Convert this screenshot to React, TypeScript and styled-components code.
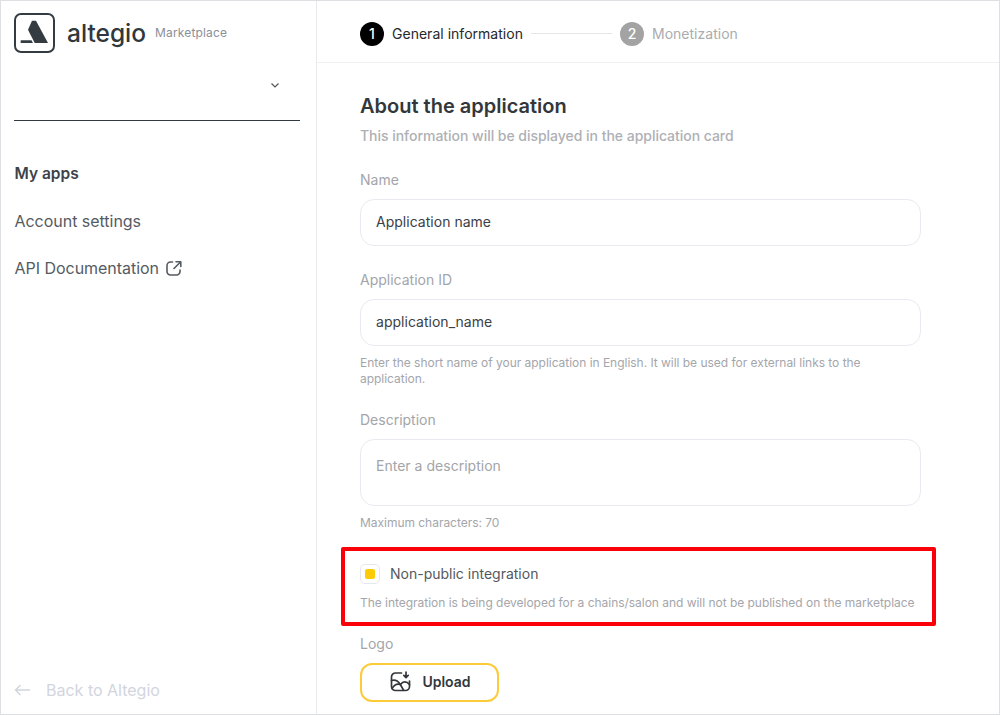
import React from "react";
import styled, { createGlobalStyle } from "styled-components";

const Global = createGlobalStyle`
  html, body { margin: 0; padding: 0; height: 100%; background: #fff; }
  body { font-family: Inter, "Liberation Sans", sans-serif; overflow: hidden; }
  * { box-sizing: border-box; }
`;

const Page = styled.div`
  width: 1000px;
  height: 715px;
  display: flex;
  overflow: hidden;
  border: 1px solid #dedfe2;
  background: #fff;
`;

const Sidebar = styled.aside`
  width: 316px;
  flex: none;
  display: flex;
  flex-direction: column;
  border-right: 1px solid #e9eaee;
  padding: 12px 16px 0 13px;
`;

const Brand = styled.div`
  display: flex;
  align-items: center;
  height: 40px;
`;

const LogoMark = styled.svg`
  width: 41px;
  height: 40px;
  flex: none;
`;

const Wordmark = styled.span`
  margin-left: 12px;
  font-family: Inter, sans-serif;
  font-size: 24.5px;
  font-weight: 500;
  color: #2f383d;
  line-height: 30px;
`;

const BrandTag = styled.span`
  margin-left: 9px;
  margin-top: -2px;
  font-size: 12px;
  letter-spacing: 0.15px;
  color: #8a8f99;
`;

const Select = styled.div`
  height: 68px;
  border-bottom: 1.5px solid #333a40;
  display: flex;
  justify-content: flex-end;
  padding: 29px 20px 0 0;
`;

const Nav = styled.nav`
  display: flex;
  flex-direction: column;
  margin-top: 28.6px;
  padding-left: 0.5px;
`;

const NavItem = styled.a<{ $active?: boolean }>`
  height: 47.5px;
  display: flex;
  align-items: center;
  gap: 7px;
  font-size: ${(p) => (p.$active ? 15.5 : 16)}px;
  letter-spacing: ${(p) => (p.$active ? 0 : -0.03)}px;
  font-weight: ${(p) => (p.$active ? 600 : 400)};
  color: ${(p) => (p.$active ? "#3c4248" : "#555b62")};
`;

const BackLink = styled.a`
  margin-top: auto;
  margin-bottom: 12px;
  display: flex;
  align-items: center;
  gap: 15px;
  font-size: 16px;
  color: #d2d5de;
  height: 24px;
`;

const Main = styled.main`
  flex: 1;
  min-width: 0;
  display: flex;
  flex-direction: column;
`;

const Stepper = styled.header`
  height: 62px;
  flex: none;
  border-bottom: 1px solid #f0f0f3;
  display: flex;
  align-items: center;
  padding: 4px 0 0 43px;
`;

const StepNum = styled.span<{ $active?: boolean }>`
  width: 24px;
  height: 24px;
  border-radius: 50%;
  display: flex;
  align-items: center;
  justify-content: center;
  font-size: 14px;
  font-weight: 500;
  color: #fff;
  background: ${(p) => (p.$active ? "#000" : "#a3a3a3")};
`;

const StepLabel = styled.span<{ $active?: boolean }>`
  margin-left: 8px;
  font-size: 14px;
  letter-spacing: 0.02px;
  color: ${(p) => (p.$active ? "#26282b" : "#aaacaf")};
`;

const StepLine = styled.span`
  width: 81px;
  height: 1px;
  background: #e4e5e8;
  margin: 0 8px;
`;

const Content = styled.section`
  position: relative;
  padding: 0 0 0 43px;
  width: 604px;
  flex: 1;
`;

const Title = styled.h1`
  margin: 29px 0 0;
  font-size: 20px;
  line-height: 28px;
  font-weight: 600;
  color: #33373b;
`;

const Subtitle = styled.p`
  margin: 6px 0 0;
  font-size: 14px;
  line-height: 20px;
  font-weight: 500;
  letter-spacing: -0.03px;
  color: #aeb0b5;
`;

const Label = styled.div<{ $top: number }>`
  margin-top: ${(p) => p.$top}px;
  font-size: 14px;
  line-height: 20px;
  color: #a3a5aa;
`;

const Field = styled.div<{ $tall?: boolean; $placeholder?: boolean }>`
  margin-top: 9px;
  width: 561px;
  height: ${(p) => (p.$tall ? 67 : 47)}px;
  border: 1.5px solid #e9eaf0;
  border-radius: 14px;
  padding: ${(p) => (p.$tall ? "17px" : "13px")} 15px 0;
  font-size: 14px;
  line-height: 18px;
  letter-spacing: 0.02px;
  color: ${(p) => (p.$placeholder ? "#a3a5aa" : "#3c4045")};
`;

const Hint = styled.p<{ $top: number }>`
  margin: ${(p) => p.$top}px 0 0;
  width: 561px;
  font-size: 12px;
  line-height: 16px;
  letter-spacing: -0.03px;
  color: #a4a6ab;
`;

const CheckRow = styled.div`
  margin-top: 33px;
  display: flex;
  align-items: center;
  gap: 10px;
  font-size: 14px;
  line-height: 20px;
  color: #54585e;
`;

const CheckBox = styled.span`
  width: 20px;
  height: 20px;
  border: 1.5px solid #e6e7ef;
  border-radius: 5px;
  display: flex;
  align-items: center;
  justify-content: center;
  &::after {
    content: "";
    width: 10px;
    height: 10px;
    border-radius: 2px;
    background: #ffcb05;
  }
`;

const UploadButton = styled.button`
  margin-top: 9px;
  width: 139px;
  height: 39px;
  border: 2px solid #fccb3a;
  border-radius: 12px;
  background: #fff;
  display: flex;
  align-items: center;
  justify-content: center;
  gap: 11px;
  font-family: inherit;
  font-size: 14px;
  font-weight: 600;
  color: #33373b;
  padding: 0 0 2px 2px;
`;

const Highlight = styled.div`
  position: absolute;
  left: 24px;
  top: 484px;
  width: 595px;
  height: 79px;
  border: 4px solid #fa0008;
  border-radius: 2px;
  pointer-events: none;
`;

export default function App() {
  return (
    <>
      <Global />
      <Page>
        <Sidebar>
          <Brand>
            <LogoMark viewBox="0 0 41 40" aria-hidden>
              <rect x="1" y="1" width="39" height="38" rx="6" fill="none" stroke="#343c42" strokeWidth="2" />
              <path d="M18 7.7 H22 L34 30 H20.7 L14 16.7 Z" fill="#343c42" />
              <path d="M6.7 27.3 H17.5 L19 30 H6.7 Z" fill="#343c42" />
            </LogoMark>
            <Wordmark>altegio</Wordmark>
            <BrandTag>Marketplace</BrandTag>
          </Brand>
          <Select>
            <svg width="10" height="7" viewBox="0 0 10 7" aria-hidden>
              <path d="M1.5 1.5 L5 5 L8.5 1.5" fill="none" stroke="#555" strokeWidth="1.2" />
            </svg>
          </Select>
          <Nav>
            <NavItem $active>My apps</NavItem>
            <NavItem>Account settings</NavItem>
            <NavItem>
              API Documentation
              <svg width="16" height="16" viewBox="0 0 16 16" fill="none" stroke="#555b62" strokeWidth="1.6" strokeLinecap="round" strokeLinejoin="round" aria-hidden>
                <path d="M6.5 2 H4.5 A3.5 3.5 0 0 0 1 5.5 V11.5 A3.5 3.5 0 0 0 4.5 15 H10.5 A3.5 3.5 0 0 0 14 11.5 V10" />
                <path d="M8 8.5 L14 2.5" />
                <path d="M10 1.8 H14.8 V6.5" />
              </svg>
            </NavItem>
          </Nav>
          <BackLink>
            <svg width="17" height="12" viewBox="0 0 17 12" fill="none" stroke="#d2d5de" strokeWidth="1.4" aria-hidden>
              <path d="M16 6 H1.5 M6.5 1 L1.5 6 L6.5 11" />
            </svg>
            Back to Altegio
          </BackLink>
        </Sidebar>
        <Main>
          <Stepper>
            <StepNum $active>1</StepNum>
            <StepLabel $active>General information</StepLabel>
            <StepLine />
            <StepNum>2</StepNum>
            <StepLabel>Monetization</StepLabel>
          </Stepper>
          <Content>
            <Title>About the application</Title>
            <Subtitle>This information will be displayed in the application card</Subtitle>
            <Label $top={24}>Name</Label>
            <Field>Application name</Field>
            <Label $top={24}>Application ID</Label>
            <Field>application_name</Field>
            <Hint $top={9}>Enter the short name of your application in English. It will be used for external links to the application.</Hint>
            <Label $top={23}>Description</Label>
            <Field $tall $placeholder>Enter a description</Field>
            <Hint $top={9}>Maximum characters: 70</Hint>
            <CheckRow>
              <CheckBox />
              Non-public integration
            </CheckRow>
            <Hint $top={11}>The integration is being developed for a chains/salon and will not be published on the marketplace</Hint>
            <Label $top={23}>Logo</Label>
            <UploadButton>
              <svg width="21" height="21" viewBox="0 0 21 21" fill="none" stroke="#33373b" strokeWidth="1.7" strokeLinecap="round" strokeLinejoin="round" aria-hidden>
                <path d="M11.5 2 H5.5 A4 4 0 0 0 1.5 6 V15.5 A4 4 0 0 0 5.5 19.5 H15.5 A4 4 0 0 0 19.5 15.5 V10" />
                <path d="M1.5 9.5 C5 8.5 8 10 10 13 L13.5 19" />
                <path d="M2 17.5 C4.5 13.5 7 12.5 10 13.5" />
                <path d="M10.5 13.5 C13 10 16.5 10 19.5 13.5" />
                <path d="M16 1 V6.5 M13.8 4.4 L16 6.6 L18.2 4.4" />
              </svg>
              Upload
            </UploadButton>
            <Highlight />
          </Content>
        </Main>
      </Page>
    </>
  );
}
